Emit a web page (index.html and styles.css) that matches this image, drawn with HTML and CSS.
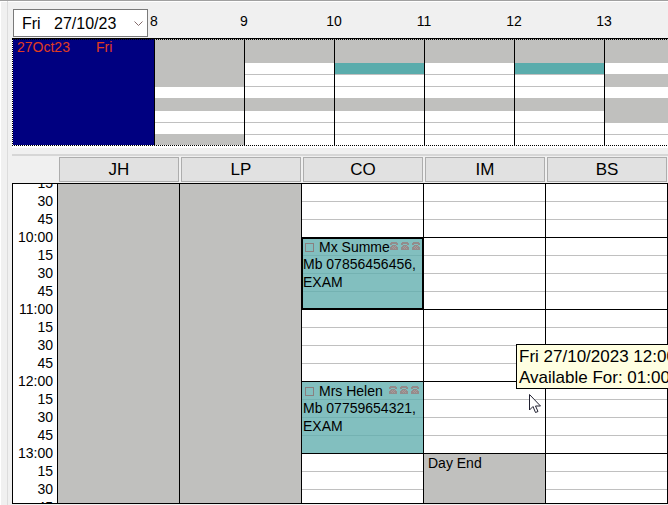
FILE: index.html
```html
<!DOCTYPE html>
<html lang="en">
<head>
<meta charset="utf-8">
<title>Appointments</title>
<link rel="stylesheet" href="styles.css">
</head>
<body>
<svg class="defs" aria-hidden="true">
  <symbol id="phone" viewBox="0 0 8 8">
    <path d="M1 0h6v1h1v2H6V2H2v1H0V1h1zM2 3h4v1h1v1h1v3H0V5h1V4h1z"/>
    <path class="phone-dial" d="M3 4h1v1H3zM5 4h1v1H5zM2 5h1v1H2zM4 5h1v1H4zM3 6h1v1H3zM5 6h1v1H5z"/>
  </symbol>
</svg>
<main class="app">
  <header class="toolbar">
    <div class="date-picker">
      <select class="date-select" aria-label="Date">
        <option>Fri&nbsp;&nbsp; 27/10/23</option>
      </select>
      <svg class="chevron" viewBox="0 0 9 5" aria-hidden="true"><path d="M0.5 0.5l4 4 4-4"/></svg>
    </div>
    <div class="hours"><span>8</span><span>9</span><span>10</span><span>11</span><span>12</span><span>13</span></div>
  </header>

  <section class="overview" aria-label="Day overview">
    <div class="overview-day"><span>27Oct23</span><span>Fri</span></div>
    <div class="overview-hour"><i class="off"></i><i class="off"></i><i class="off"></i><i class="off"></i><i></i><i class="off"></i><i></i><i></i><i class="off"></i></div>
    <div class="overview-hour"><i class="off"></i><i class="off"></i><i></i><i></i><i></i><i class="off"></i><i></i><i></i><i></i></div>
    <div class="overview-hour"><i class="off"></i><i class="off"></i><i class="booked"></i><i></i><i></i><i class="off"></i><i></i><i></i><i></i></div>
    <div class="overview-hour"><i class="off"></i><i class="off"></i><i></i><i></i><i></i><i class="off"></i><i></i><i></i><i></i></div>
    <div class="overview-hour"><i class="off"></i><i class="off"></i><i class="booked"></i><i></i><i></i><i class="off"></i><i></i><i></i><i></i></div>
    <div class="overview-hour"><i class="off"></i><i class="off"></i><i></i><i class="off"></i><i></i><i class="off"></i><i class="off"></i><i></i><i></i></div>
  </section>

  <div class="people">
    <button type="button">JH</button>
    <button type="button">LP</button>
    <button type="button">CO</button>
    <button type="button">IM</button>
    <button type="button">BS</button>
  </div>

  <section class="calendar" aria-label="Appointment book">
    <div class="times">
      <span>15</span><span>30</span><span>45</span>
      <span>10:00</span><span>15</span><span>30</span><span>45</span>
      <span>11:00</span><span>15</span><span>30</span><span>45</span>
      <span>12:00</span><span>15</span><span>30</span><span>45</span>
      <span>13:00</span><span>15</span><span>30</span><span>45</span>
    </div>
    <div class="column closed"></div>
    <div class="column closed"></div>
    <div class="column">
      <article class="appointment selected from-ten">
        <div class="appointment-head">
          <input type="checkbox" id="arrived-1"><label for="arrived-1">Mx Summe</label>
          <span class="phones"><svg><use href="#phone"/></svg><svg><use href="#phone"/></svg><svg><use href="#phone"/></svg></span>
        </div>
        <div>Mb 07856456456,</div>
        <div>EXAM</div>
      </article>
      <article class="appointment from-twelve">
        <div class="appointment-head">
          <input type="checkbox" id="arrived-2"><label for="arrived-2">Mrs Helen</label>
          <span class="phones"><svg><use href="#phone"/></svg><svg><use href="#phone"/></svg><svg><use href="#phone"/></svg></span>
        </div>
        <div>Mb 07759654321,</div>
        <div>EXAM</div>
      </article>
    </div>
    <div class="column">
      <div class="day-end">Day End</div>
    </div>
    <div class="column"></div>
  </section>

  <div class="tooltip" role="tooltip">Fri 27/10/2023 12:00<br>Available For: 01:00</div>
  <svg class="pointer" viewBox="0 0 12 19" aria-hidden="true"><path d="M0.5 0.5v15.5l3.5-3.5 2.5 6 2.500-1-2.500-5.500h5z"/></svg>
</main>
</body>
</html>
```
FILE: styles.css
```css
:root {
  --face: #f0f0f0;
  --off: #c0c0be;
  --line: #c0c0c0;
  --slot: 18px;
}

* {
  box-sizing: border-box;
}

body {
  margin: 0;
  background: var(--face);
  color: #000;
  font: 14px/18px "Liberation Sans", Arial, sans-serif;
}

.defs {
  display: none;
}

.app {
  position: relative;
  display: flex;
  flex-direction: column;
  height: 100vh;
  padding: 0 0 1px 12px;
  overflow: hidden;
  border-top: 1px solid #a0a0a0;
  background: linear-gradient(90deg, #fff 1px, transparent 1px 7px, #dcdcdc 7px 8px, transparent 8px),
    linear-gradient(#fff 1px, transparent 1px);
}

.toolbar {
  display: flex;
  height: 37px;
  padding: 8px 0 0 1px;
}

.date-picker {
  display: grid;
  width: 135px;
  height: 28px;
  align-items: center;
}

.date-select {
  grid-area: 1 / 1;
  width: 100%;
  height: 100%;
  padding: 0 8px;
  border: 1px solid #7a7a7a;
  border-radius: 0;
  background: #fff;
  color: #000;
  font: 16px "Liberation Sans", Arial, sans-serif;
  appearance: none;
}

.chevron {
  grid-area: 1 / 1;
  justify-self: end;
  width: 9px;
  height: 5px;
  margin-right: 5px;
  fill: none;
  stroke: #856c6c;
  pointer-events: none;
}

.hours {
  display: flex;
  flex: 1;
  margin-left: -39px;
  overflow: hidden;
  pointer-events: none;
  padding-top: 3px;
}

.hours span {
  flex: 0 0 90px;
  text-align: center;
}

.overview {
  position: relative;
  display: flex;
  flex: none;
  height: 110px;
  overflow: hidden;
  border-top: 1px solid #000;
  border-bottom: 2px solid #fff;
  background: #fff;
}

.overview::after {
  content: "";
  position: absolute;
  inset: 0;
  background:
    repeating-linear-gradient(90deg, #000 0 1px, transparent 1px 2px) top / 100% 1px no-repeat,
    repeating-linear-gradient(90deg, #000 0 1px, #fff 1px 2px) bottom / 100% 1px no-repeat,
    repeating-linear-gradient(#000 0 1px, #fff 1px 2px) left / 1px 100% no-repeat;
}

.overview-day {
  display: flex;
  flex: 0 0 142px;
  gap: 26px;
  padding-left: 5px;
  background: #000080;
  color: #e03c20;
  line-height: 16px;
}

.overview-hour {
  flex: 0 0 90px;
  border-left: 1px solid #000;
}

.overview-hour i {
  display: block;
  height: 12px;
  border-bottom: 1px solid var(--line);
}

.overview-hour .off {
  background: var(--off);
  border-color: var(--off);
  box-shadow: 0 -1px var(--off);
}

.overview-hour .booked {
  background: #5aacac;
}

.people {
  display: grid;
  flex: none;
  grid-template-columns: repeat(5, 1fr);
  gap: 2px;
  height: 29px;
  margin-top: 6px;
  padding: 1px 1px 1px 47px;
  border-top: 2px solid #d6d6d6;
}

.people button {
  padding: 0;
  border: 1px solid #adadad;
  background: #e1e1e1;
  color: #000;
  font: 17px "Liberation Sans", Arial, sans-serif;
}

.calendar {
  display: grid;
  flex: 1;
  grid-template-columns: 44px repeat(5, 1fr);
  grid-template-rows: minmax(0, 1fr);
  min-height: 0;
  overflow: hidden;
  border: 1px solid #000;
  background: #fff;
}

.times {
  display: flex;
  flex-direction: column;
  margin-top: -10px;
  padding-right: 4px;
  text-align: right;
}

.times span {
  flex: 0 0 var(--slot);
}

.column {
  display: grid;
  grid-template-rows: repeat(18, var(--slot));
  margin-top: -1px;
  border-left: 1px solid #000;
  background:
    linear-gradient(#000 1px, transparent 1px) 0 54px / 100% 72px,
    linear-gradient(var(--line) 1px, transparent 1px) 0 0 / 100% var(--slot);
}

.column.closed {
  background: var(--off);
}

.appointment {
  display: grid;
  grid-template-rows: 16px 18px 18px;
  min-width: 0;
  padding: 1px 0 0 1px;
  border-top: 1px solid #000;
  background: linear-gradient(#74b2b2 1px, #82bfbf 1px) 0 -1px / 100% var(--slot);
  white-space: nowrap;
}

.from-ten {
  grid-row: 4 / span 4;
}

.from-twelve {
  grid-row: 12 / span 4;
}

.appointment.selected {
  margin-bottom: -1px;
  padding: 0;
  border: solid #000;
  border-width: 2px 1px;
  background-position: 0 -2px;
}

.appointment-head {
  display: flex;
  align-items: center;
  line-height: 16px;
}

.appointment input {
  width: 9px;
  height: 9px;
  margin: 0 5px 0 2px;
  border: 1px solid #8a8080;
  appearance: none;
}

.phones {
  display: flex;
  gap: 3px;
  margin: 0 4px 3px auto;
}

.phones svg {
  width: 8px;
  height: 8px;
  fill: #938b8b;
}

.phone-dial {
  fill: #ac9898;
}

.day-end {
  grid-row: 16 / span 3;
  padding-left: 4px;
  border-top: 1px solid #000;
  background: var(--off);
}

.tooltip {
  position: absolute;
  top: 343px;
  left: 516px;
  padding: 1px 2px 0;
  border: 1px solid #000;
  background: #ffffe1;
  font-size: 17px;
  line-height: 21px;
  white-space: nowrap;
}

.pointer {
  position: absolute;
  top: 393px;
  left: 529px;
  width: 12px;
  height: 19px;
  fill: #fff;
  stroke: #202030;
}
```
